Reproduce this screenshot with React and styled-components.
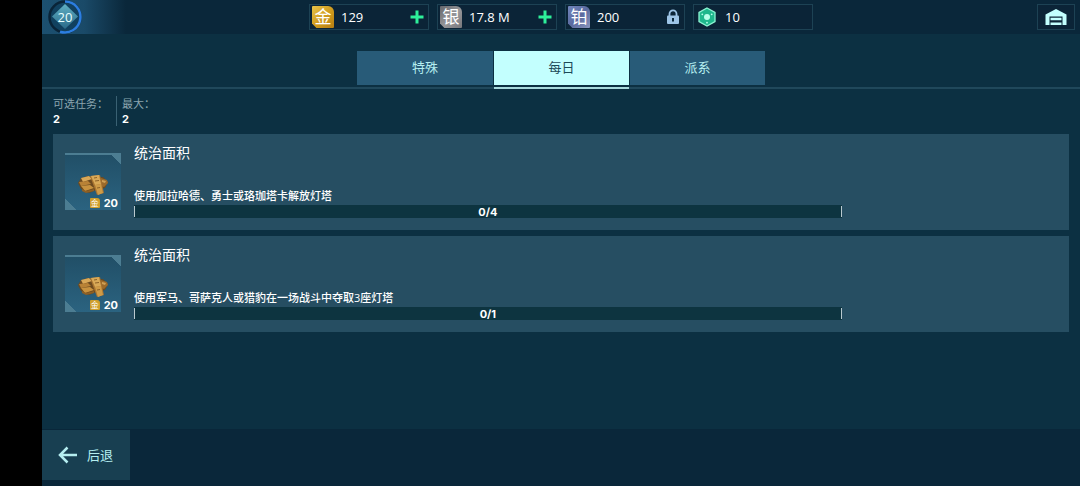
import React, { useState } from "react";
import styled, { createGlobalStyle } from "styled-components";

const TABS = ["特殊", "每日", "派系"];

const CURRENCIES = [
  {
    id: "gold",
    glyph: "金",
    amount: "129",
    tile: "linear-gradient(135deg, #e8c34a, #cf9a1c 55%, #b57d12)",
    action: "add",
  },
  {
    id: "silver",
    glyph: "银",
    amount: "17.8 M",
    tile: "linear-gradient(135deg, #66676c, #97979a 55%, #77777b)",
    action: "add",
  },
  {
    id: "platinum",
    glyph: "铂",
    amount: "200",
    tile: "linear-gradient(135deg, #7286bd, #5a6a9f 50%, #8a96bd)",
    action: "locked",
  },
  { id: "crystal", amount: "10" },
];

const MISSIONS = [
  {
    id: 1,
    title: "统治面积",
    text: "使用加拉哈德、勇士或珞珈塔卡解放灯塔",
    reward: 20,
    done: 0,
    total: 4,
  },
  {
    id: 2,
    title: "统治面积",
    text: "使用军马、哥萨克人或猎豹在一场战斗中夺取3座灯塔",
    reward: 20,
    done: 0,
    total: 1,
  },
];

function Currency({ glyph, amount, tile, action }) {
  return (
    <CurrencyBox>
      {glyph ? <Tile $fill={tile}>{glyph}</Tile> : <CrystalIcon />}
      <Amount>{amount}</Amount>
      {action === "add" && (
        <IconButton aria-label={`增加${glyph}`}>
          <svg width="14" height="14" viewBox="0 0 14 14">
            <path d="M7 .5v13M.5 7h13" stroke="#2ef09a" strokeWidth="3" />
          </svg>
        </IconButton>
      )}
      {action === "locked" && <LockIcon />}
    </CurrencyBox>
  );
}

function CrystalIcon() {
  return (
    <svg width="22" height="22" viewBox="0 0 22 22">
      <path
        d="M11 2l8 4.500v9L11 20l-8-4.500v-9z"
        fill="#1eb78c"
        stroke="#8df5d3"
        strokeWidth="1.300"
      />
      <circle cx="11" cy="11" r="3" fill="#b8ffea" />
      <circle cx="6.300" cy="8.300" r=".9" fill="#b8ffea" />
      <circle cx="15.700" cy="8.300" r=".9" fill="#b8ffea" />
      <circle cx="11" cy="16.700" r=".9" fill="#b8ffea" />
    </svg>
  );
}

function LockIcon() {
  return (
    <svg width="14" height="16" viewBox="0 0 14 16">
      <path
        d="M3.500 7V4.800a3.500 3.500 0 0 1 7 0V7"
        fill="none"
        stroke="#9dc4e6"
        strokeWidth="1.800"
      />
      <rect x="1" y="6.500" width="12" height="8.500" rx="1" fill="#9dc4e6" />
      <path d="M6 9h2v3.500H6z" fill="#0b283b" />
    </svg>
  );
}

function HangarIcon() {
  return (
    <svg width="22" height="18" viewBox="0 0 22 18">
      <path d="M11 1l10.500 5.500V17h-21V6.500z" fill="#c3fffe" />
      <path d="M4.500 8.500h13V17h-13z" fill="#0b2437" />
      <path d="M5.500 9.800h11v2.400h-11zM5.500 14.600h11V17h-11z" fill="#c3fffe" />
    </svg>
  );
}

function Emblem() {
  return (
    <svg width="36" height="34" viewBox="0 0 36 34">
      <defs>
        <linearGradient id="gem" x1="0" y1="0" x2="0" y2="1">
          <stop offset="0" stopColor="#5fb0c4" />
          <stop offset="1" stopColor="#2a6a88" />
        </linearGradient>
      </defs>
      <circle cx="18" cy="17" r="15.500" fill="#11415f" stroke="#0a2438" strokeWidth="2.500" />
      <path
        d="M18 1.500A15.500 15.500 0 1 1 13 31.700"
        fill="none"
        stroke="#2c7ee0"
        strokeWidth="2.500"
      />
      <path d="M18 4l13 12.500L18 29 5 16.500z" fill="url(#gem)" />
      <EmblemText x="18" y="22" textAnchor="middle">
        20
      </EmblemText>
    </svg>
  );
}

function GoldPile() {
  return (
    <svg width="32" height="22" viewBox="0 0 32 22">
      <path d="M1 9l3-5 7-2 5 2 10-1 5 5-3 6-9 2-7 3-8-4z" fill="#6d4a1f" />
      <path d="M4 4l8-2 3 3-9 3z" fill="#d9a858" />
      <path d="M2 8l9-1 3 3-10 2z" fill="#b98236" />
      <path d="M4 12l9-1 4 3-9 3z" fill="#c8923f" />
      <path d="M5 15l4 2 8-2v2l-8 2-4-2z" fill="#8d5f24" />
      <path d="M24 4l6 2 1 3-4 4-3-1z" fill="#9b6a2b" />
      <path d="M25 6l4 1-1 2-3-1z" fill="#d0a055" />
      <path d="M13 2l10-1 4 18-7 2z" fill="#a87431" />
      <path d="M14 2l8-1 2 9-6 1z" fill="#d9a957" />
      <path d="M18 11l6-1 2 9-5 2z" fill="#cf9b47" />
      <path d="M17 4l3-.5M18 7l4-.5M20 14l3-.5" stroke="#8d6127" strokeWidth="1" />
    </svg>
  );
}

function Mission({ title, text, reward, done, total }) {
  return (
    <Card>
      <Thumb>
        <GoldPile />
        <Reward>
          <MiniTile>金</MiniTile>
          {reward}
        </Reward>
      </Thumb>
      <Details>
        <Title>{title}</Title>
        <Description>{text}</Description>
        <Progress
          role="progressbar"
          aria-label={text}
          aria-valuenow={done}
          aria-valuemax={total}
        >
          {done}/{total}
        </Progress>
      </Details>
    </Card>
  );
}

function App() {
  const [active, setActive] = useState(1);

  return (
    <>
      <GlobalStyle />
      <Screen>
        <Header>
          <Player>
            <Emblem />
          </Player>
          <Currencies>
            {CURRENCIES.map((item) => (
              <Currency key={item.id} {...item} />
            ))}
          </Currencies>
          <HangarButton aria-label="机库">
            <HangarIcon />
          </HangarButton>
        </Header>

        <TabBar role="tablist">
          {TABS.map((tab, i) => (
            <Tab
              key={tab}
              role="tab"
              aria-selected={i === active}
              $active={i === active}
              onClick={() => setActive(i)}
            >
              {tab}
            </Tab>
          ))}
        </TabBar>

        <Content>
          <Stats>
            <Stat>
              <dt>可选任务：</dt>
              <dd>2</dd>
            </Stat>
            <Stat>
              <dt>最大：</dt>
              <dd>2</dd>
            </Stat>
          </Stats>
          {MISSIONS.map((mission) => (
            <Mission key={mission.id} {...mission} />
          ))}
        </Content>

        <Footer>
          <BackButton>
            <svg width="20" height="18" viewBox="0 0 20 18">
              <path
                d="M19 9H2M9.500 1.500L2 9l7.500 7.500"
                fill="none"
                stroke="#b5eef0"
                strokeWidth="2.500"
              />
            </svg>
            后退
          </BackButton>
        </Footer>
      </Screen>
    </>
  );
}

export default App;

const GlobalStyle = createGlobalStyle`
  * {
    box-sizing: border-box;
  }

  body {
    margin: 0;
    background: #000;
    font-family: "Open Sans", "Noto Sans CJK SC", sans-serif;
    color: #fff;
  }

  button {
    font: inherit;
    color: inherit;
    border: 0;
    padding: 0;
    background: none;
    cursor: pointer;
  }

  svg {
    display: block;
    flex-shrink: 0;
  }
`;

const Screen = styled.div`
  display: flex;
  flex-direction: column;
  min-height: 100vh;
  margin-left: 42px;
  background: #0c3042;
`;

const Header = styled.header`
  display: grid;
  grid-template-columns: 1fr auto 1fr;
  align-items: center;
  height: 34px;
  background: #0a273a;
`;

const Player = styled.div`
  width: 84px;
  height: 34px;
  padding-left: 5px;
  background: linear-gradient(90deg, #1c5070, #1a4a68 50%, #0a273a);
`;

const EmblemText = styled.text`
  font-size: 13px;
  fill: #e8ffff;
`;

const Currencies = styled.div`
  display: flex;
  gap: 8px;
`;

const CurrencyBox = styled.div`
  display: flex;
  align-items: center;
  width: 120px;
  height: 26px;
  padding: 0 4px 0 2px;
  border: 1px solid #1d4254;
  background: #0b2437;
`;

const Tile = styled.span`
  width: 22px;
  height: 22px;
  font-size: 17px;
  line-height: 22px;
  text-align: center;
  border-radius: 1px 6px 1px 1px;
  clip-path: polygon(0 0, 100% 0, 100% 100%, 20% 100%, 0 80%);
  background: ${({ $fill }) => $fill};
`;

const Amount = styled.span`
  flex: 1;
  padding-left: 7px;
  font-size: 13px;
  line-height: 22px;
`;

const IconButton = styled.button`
  display: flex;
`;

const HangarButton = styled.button`
  display: flex;
  align-items: center;
  justify-content: center;
  justify-self: end;
  width: 38px;
  height: 26px;
  margin-right: 5px;
  border: 1px solid #1d4254;
  background: #0b2437;
`;

const TabBar = styled.div`
  display: flex;
  justify-content: center;
  padding-top: 17px;
  border-bottom: 2px solid #20485b;
`;

const Tab = styled.button`
  position: relative;
  width: 136px;
  height: 34px;
  margin-bottom: 2px;
  font-family: "Noto Sans CJK SC", sans-serif;
  font-size: 13px;
  line-height: 32px;
  padding-bottom: 2px;
  color: ${({ $active }) => ($active ? "#1c4a58" : "#b5eef0")};
  background: ${({ $active }) => ($active ? "#c3fffe" : "#285b78")};

  & + & {
    border-left: 1px solid #0c3042;
  }

  &::after {
    content: "";
    display: ${({ $active }) => ($active ? "block" : "none")};
    position: absolute;
    left: 0;
    right: 0;
    bottom: -4px;
    height: 2px;
    background: #a8dadd;
  }
`;

const Content = styled.main`
  flex: 1;
  display: flex;
  flex-direction: column;
  gap: 6px;
  padding: 7px 11px;
`;

const Stats = styled.dl`
  display: flex;
  margin: 0 0 2px;
`;

const Stat = styled.div`
  font-size: 11px;

  & + & {
    padding-left: 5px;
    margin-left: 8px;
    border-left: 1px solid #3a6173;
  }

  dt {
    line-height: 16px;
    color: #8ba5af;
  }

  dd {
    margin: 0;
    font-family: Inter, sans-serif;
    line-height: 14px;
    font-weight: 700;
  }
`;

const Card = styled.article`
  display: grid;
  grid-template-columns: 56px 7fr 2fr;
  column-gap: 13px;
  align-items: center;
  padding: 9px 12px 12px;
  background: #264e62;
`;

const Thumb = styled.div`
  display: flex;
  flex-direction: column;
  align-items: center;
  height: 57px;
  margin-top: 2px;
  padding-top: 19px;
  border-top: 2px solid #4c7d92;
  background:
    linear-gradient(45deg, #4c7d92 8px, transparent 8px) no-repeat,
    linear-gradient(225deg, #4c7d92 7px, transparent 7px) no-repeat,
    linear-gradient(#214f67, #2b6380);
`;

const Reward = styled.div`
  display: flex;
  align-items: center;
  align-self: flex-end;
  gap: 4px;
  padding-right: 3px;
  font-family: Inter, sans-serif;
  font-size: 11px;
  line-height: 14px;
  font-weight: 700;
`;

const MiniTile = styled.span`
  width: 10px;
  height: 10px;
  font-family: "Noto Sans CJK SC", sans-serif;
  font-size: 8px;
  line-height: 10px;
  font-weight: 400;
  text-align: center;
  border-radius: 1px 3px 1px 1px;
  background: #cf9f2c;
`;

const Details = styled.div`
  min-width: 0;
`;

const Title = styled.h2`
  margin: 0 0 25px;
  font-size: 14px;
  line-height: 20px;
  font-weight: 400;
`;

const Description = styled.p`
  margin: 0 0 1px;
  font-size: 11px;
  line-height: 16px;
  font-weight: 500;
`;

const Progress = styled.div`
  display: flex;
  justify-content: space-between;
  height: 13px;
  padding: 1px 0;
  font-family: Inter, sans-serif;
  font-size: 11px;
  line-height: 12px;
  font-weight: 700;
  background: #0d3440;

  &::before,
  &::after {
    content: "";
    width: 1px;
    background: #b9c9cf;
  }
`;

const Footer = styled.footer`
  height: 57px;
  padding-top: 1px;
  background: #0a273a;
`;

const BackButton = styled.button`
  display: flex;
  align-items: center;
  gap: 9px;
  width: 88px;
  height: 50px;
  padding: 0 0 1px 16px;
  font-family: "Noto Sans CJK SC", sans-serif;
  font-size: 13px;
  color: #b5eef0;
  background: #183f51;
`;
